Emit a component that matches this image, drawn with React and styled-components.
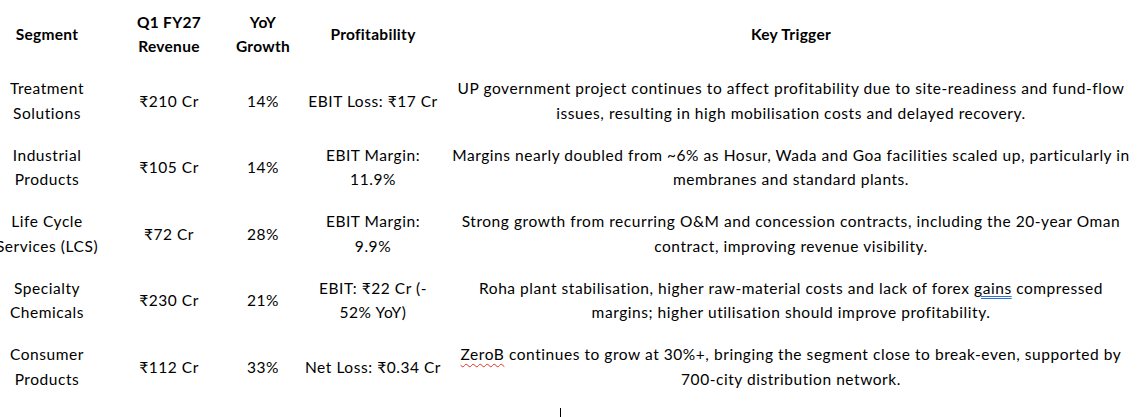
import React from "react";
import styled, { createGlobalStyle } from "styled-components";

const GlobalStyle = createGlobalStyle`
  html, body {
    margin: 0;
    padding: 0;
    background: #ffffff;
    overflow: hidden;
  }
  body {
    font-family: Lato, "Open Sans", "Liberation Sans", sans-serif;
    color: #000000;
  }
`;

const Page = styled.div`
  width: 1146px;
  height: 417px;
  overflow: hidden;
  padding-top: 1px;
  box-sizing: border-box;
`;

const Table = styled.div`
  display: grid;
  grid-template-columns: 114px 130px 58px 162px 674px;
  margin-left: -10px;
  width: 1138px;
`;

const Cell = styled.div`
  display: flex;
  flex-direction: column;
  justify-content: center;
  align-items: center;
  padding: 8.75px 0;
  height: 66.5px;
  box-sizing: border-box;
  font-size: 15.5px;
  letter-spacing: ${(p) => (p.$head ? "0.3px" : "0.55px")};
  line-height: 24.5px;
  font-weight: ${(p) => (p.$head ? 700 : 400)};
  text-align: center;
`;

const Line = styled.span`
  white-space: nowrap;
  display: block;
`;

const Squiggle = styled.span`
  text-decoration: underline wavy #e0312a;
  text-decoration-thickness: 1px;
  text-underline-offset: 3px;
`;

const Grammar = styled.span`
  text-decoration: underline double #2f6fd6;
  text-decoration-thickness: 1px;
  text-underline-offset: 2px;
`;

const EmptyPara = styled.div`
  padding-left: 560px;
  padding-top: 8px;
`;

const Caret = styled.span`
  display: block;
  width: 1px;
  height: 9px;
  background: #000;
`;

const headers = [
  ["Segment"],
  ["Q1 FY27", "Revenue"],
  ["YoY", "Growth"],
  ["Profitability"],
  ["Key Trigger"],
];

const rows = [
  {
    segment: ["Treatment", "Solutions"],
    revenue: "₹210 Cr",
    growth: "14%",
    profit: ["EBIT Loss: ₹17 Cr"],
    trigger: [
      "UP government project continues to affect profitability due to site-readiness and fund-flow",
      "issues, resulting in high mobilisation costs and delayed recovery.",
    ],
  },
  {
    segment: ["Industrial", "Products"],
    revenue: "₹105 Cr",
    growth: "14%",
    profit: ["EBIT Margin:", "11.9%"],
    trigger: [
      "Margins nearly doubled from ~6% as Hosur, Wada and Goa facilities scaled up, particularly in",
      "membranes and standard plants.",
    ],
  },
  {
    segment: ["Life Cycle", "Services (LCS)"],
    revenue: "₹72 Cr",
    growth: "28%",
    profit: ["EBIT Margin:", "9.9%"],
    trigger: [
      "Strong growth from recurring O&M and concession contracts, including the 20-year Oman",
      "contract, improving revenue visibility.",
    ],
  },
  {
    segment: ["Specialty", "Chemicals"],
    revenue: "₹230 Cr",
    growth: "21%",
    profit: ["EBIT: ₹22 Cr (-", "52% YoY)"],
    trigger: [
      <>
        Roha plant stabilisation, higher raw-material costs and lack of forex{" "}
        <Grammar>gains</Grammar> compressed
      </>,
      "margins; higher utilisation should improve profitability.",
    ],
  },
  {
    segment: ["Consumer", "Products"],
    revenue: "₹112 Cr",
    growth: "33%",
    profit: ["Net Loss: ₹0.34 Cr"],
    trigger: [
      <>
        <Squiggle>ZeroB</Squiggle> continues to grow at 30%+, bringing the segment close to break-even, supported by
      </>,
      "700-city distribution network.",
    ],
  },
];

const Lines = ({ items }) =>
  items.map((t, i) => <Line key={i}>{t}</Line>);

export default function App() {
  return (
    <Page>
      <GlobalStyle />
      <Table>
        {headers.map((h, i) => (
          <Cell $head key={i}>
            <Lines items={h} />
          </Cell>
        ))}
        {rows.map((r, i) => (
          <React.Fragment key={i}>
            <Cell>
              <Lines items={r.segment} />
            </Cell>
            <Cell>
              <Line>{r.revenue}</Line>
            </Cell>
            <Cell>
              <Line>{r.growth}</Line>
            </Cell>
            <Cell>
              <Lines items={r.profit} />
            </Cell>
            <Cell>
              <Lines items={r.trigger} />
            </Cell>
          </React.Fragment>
        ))}
      </Table>
      <EmptyPara>
        <Caret />
      </EmptyPara>
    </Page>
  );
}
